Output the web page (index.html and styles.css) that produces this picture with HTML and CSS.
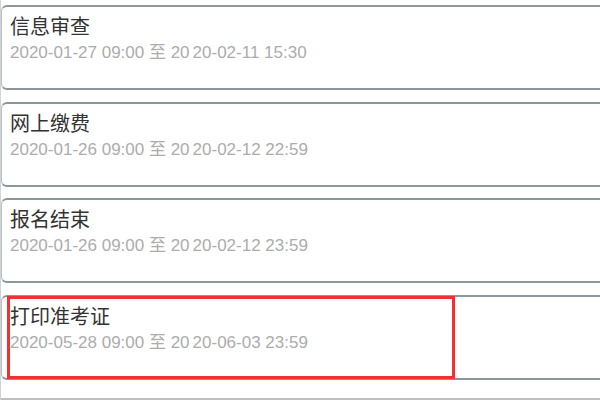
FILE: index.html
```html
<!DOCTYPE html>
<html lang="zh-CN">
  <head>
    <meta charset="UTF-8" />
    <meta name="viewport" content="width=device-width, initial-scale=1.0" />
    <title>考试安排</title>
    <link rel="stylesheet" href="styles.css">
  </head>
  <body>
    <div class="schedule-list">
      <div class="schedule-item">
        <div class="item-title">信息审查</div>
        <div class="item-time">2020-01-27 09:00 至 20<span class="gap"></span>20-02-11 15:30</div>
      </div>
      <div class="schedule-item">
        <div class="item-title">网上缴费</div>
        <div class="item-time">2020-01-26 09:00 至 20<span class="gap"></span>20-02-12 22:59</div>
      </div>
      <div class="schedule-item">
        <div class="item-title">报名结束</div>
        <div class="item-time">2020-01-26 09:00 至 20<span class="gap"></span>20-02-12 23:59</div>
      </div>
      <div class="schedule-item">
        <div class="item-title">打印准考证</div>
        <div class="item-time">2020-05-28 09:00 至 20<span class="gap"></span>20-06-03 23:59</div>
        <!-- highlight frame -->
        <div class="mark"></div>
      </div>
    </div>
    <div class="bottom-bar"></div>
  </body>
</html>
```

FILE: styles.css
```css
* {
  margin: 0;
  padding: 0;
  box-sizing: border-box;
}

html,
body {
  width: 100%;
  height: 100%;
  overflow: hidden;
}

body {
  background-color: #fff;
  border-left: 1px solid #cfd3d5;
  font-family: 'Liberation Sans', 'Noto Sans CJK SC', sans-serif;
  position: relative;
}

.schedule-list {
  display: flex;
  flex-direction: column;
  gap: 11.5px;
  padding-top: 5px;
}

.schedule-item {
  position: relative;
  width: 620px;
  height: 85px;
  padding: 8px 8px;
  background-color: #fff;
  border: 1px solid #b9c1c4;
  border-top: 2px solid #8c979c;
  border-bottom: 2px solid #8c979c;
  border-radius: 6px;
}

.item-title {
  font-size: 20px;
  line-height: 24px;
  color: #333;
}

.item-time {
  margin-top: 4px;
  font-size: 17px;
  line-height: 20px;
  color: #acacac;
  white-space: nowrap;
}

.item-time .gap {
  display: inline-block;
  width: 3px;
}

.mark {
  position: absolute;
  left: 5px;
  top: -1px;
  width: 448px;
  height: 83px;
  border: 3px solid #f2302f;
}

.bottom-bar {
  position: absolute;
  left: 0;
  right: 0;
  bottom: 0;
  height: 2px;
  background-color: #bfbfbf;
}
```
